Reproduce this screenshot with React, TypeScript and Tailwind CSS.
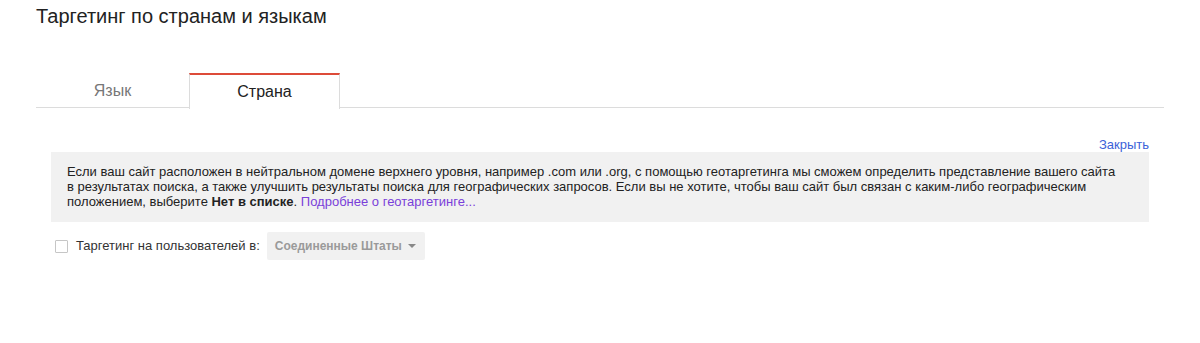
export default function App() {
  return (
    <div className="w-[1200px] h-[343px] bg-white text-[#333] overflow-hidden" style={{ fontFamily: '"Liberation Sans", Arial, sans-serif' }}>
      <div className="pl-[36px] pt-[4px] text-[20px] leading-[24px] text-[#222]">Таргетинг по странам и языкам</div>
      <div className="ml-[36px] mt-[45px] w-[1128px] h-[35px] flex border-b border-[#dcdcdc]">
        <div className="w-[153px] h-[35px] flex items-center justify-center text-[16px] text-[#777]">Язык</div>
        <div className="w-[151px] h-[36px] -mb-px flex items-center justify-center text-[16px] text-[#222] bg-white border-t-2 border-t-[#dd4b39] border-x border-x-[#dcdcdc]">Страна</div>
      </div>
      <div className="w-[1149px] flex justify-end mt-[29px] h-[15px]">
        <span className="text-[13px] leading-[15px] text-[#3b62d8]">Закрыть</span>
      </div>
      <div className="ml-[51px] w-[1098px] bg-[#f1f1f1] pl-[16px] pr-[8px] pt-[12px] pb-[13px] text-[13px] leading-[15px] text-[#222]">
        Если ваш сайт расположен в нейтральном домене верхнего уровня, например .com или .org, с помощью геотаргетинга мы сможем определить представление вашего сайта<br />
        в результатах поиска, а также улучшить результаты поиска для географических запросов. Если вы не хотите, чтобы ваш сайт был связан с каким-либо географическим<br />
        положением, выберите <b>Нет в списке</b>. <span className="text-[#7a3fd9]">Подробнее о геотаргетинге...</span>
      </div>
      <div className="ml-[55px] mt-[10px] flex items-center h-[28px]">
        <div className="w-[13px] h-[13px] border border-[#c6c6c6] rounded-[1px] bg-white"></div>
        <span className="ml-[8px] text-[13px] text-[#333]">Таргетинг на пользователей в:</span>
        <div className="ml-[7px] w-[158px] h-[28px] bg-[#f1f1f1] rounded-[2px] flex items-center pl-[8px] pr-[9px] justify-between">
          <span className="text-[12px] font-bold text-[#9a9a9a]">Соединенные Штаты</span>
          <svg width="8" height="4" viewBox="0 0 8 4"><path d="M0 0 L8 0 L4 4 Z" fill="#888" /></svg>
        </div>
      </div>
    </div>
  );
}
